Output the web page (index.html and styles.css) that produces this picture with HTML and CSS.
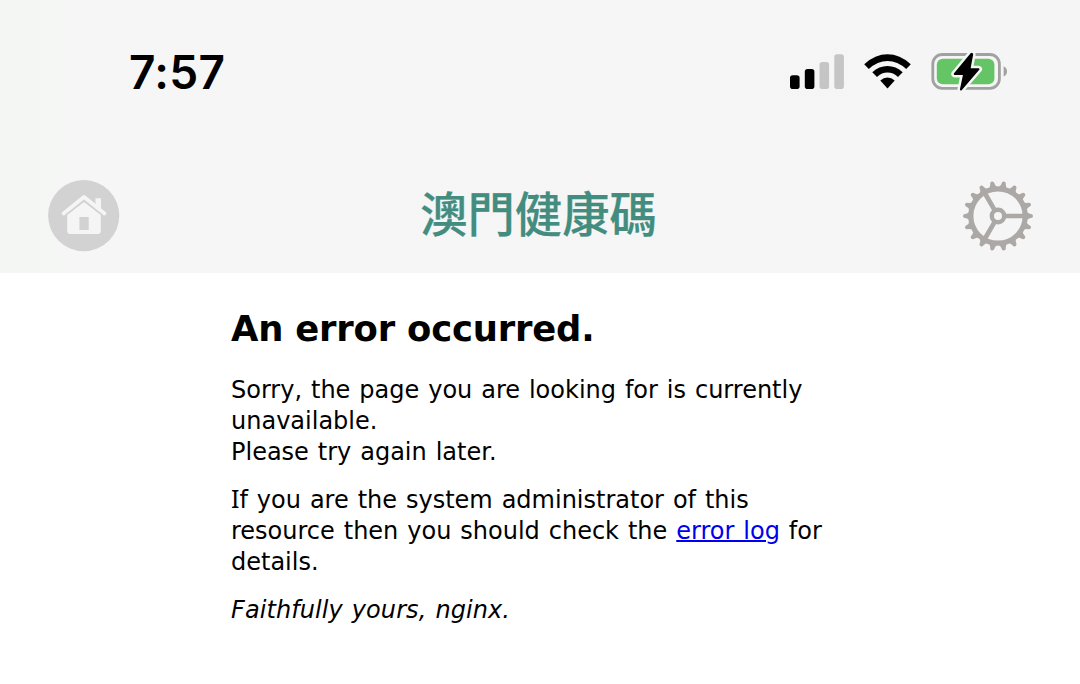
FILE: index.html
```html
<!DOCTYPE html>
<html lang="zh-Hant">
<head>
<meta charset="utf-8">
<title>澳門健康碼</title>
<link rel="stylesheet" href="styles.css">
</head>
<body>
<header class="top">
  <div class="status">
    <span class="time">7:57</span>
    <svg class="status-icons" width="230" height="60" viewBox="780 40 230 60" aria-hidden="true">
      <rect x="790" y="75.3" width="9.6" height="13.7" rx="2.8"/>
      <rect x="804.8" y="69" width="9.6" height="20" rx="2.8"/>
      <g fill="#c5c5c5"><rect x="819.5" y="62" width="9.6" height="27" rx="2.8"/><rect x="834.3" y="54.3" width="9.6" height="34.7" rx="2.8"/></g>
      <path d="M864.2 64.2Q875.2 54.3 887.5 54.3T910.8 64.2L906.2 69.1Q897.5 61.1 887.5 61.1T868.8 69.1Z"/>
      <path d="M872.3 72.3Q879 66 887.5 66T902.7 72.3L898 77Q893.3 72.6 887.5 72.6T877 77Z"/>
      <path d="M880.3 80.5Q883.6 77.5 887.5 77.5T894.7 80.5L887.5 88.5Z"/>
      <rect x="932.8" y="54.5" width="66.6" height="33.8" rx="9.5" fill="none" stroke="#a1a1a1" stroke-width="2.8"/>
      <path d="M1003.6 66.2Q1007 67.8 1007 71.4T1003.6 76.6Z" fill="#a1a1a1"/>
      <rect x="936.8" y="58.7" width="57.6" height="25.6" rx="6" fill="#65c466"/>
      <path d="M971.4 53.8L954.8 74H964.2L960.9 89.5L978.5 69.2H969.4L972.2 54.2Z" stroke="#f5f6f5" stroke-width="7" stroke-linejoin="round"/>
      <path d="M971.4 53.8L954.8 74H964.2L960.9 89.5L978.5 69.2H969.4L972.2 54.2Z" stroke="#000" stroke-width="2" stroke-linejoin="round"/>
    </svg>
  </div>
  <nav class="nav">
    <svg width="72" height="72" viewBox="-36 -36 72 72" aria-label="Home">
      <circle cx="-.3" cy="-.4" r="35.6" fill="#d2d2d2"/>
      <path d="M-20.5 -2.6L0 -19L20.5 -2.6" fill="none" stroke="#f4f5f4" stroke-width="3.8" stroke-linecap="round" stroke-linejoin="round"/>
      <path d="M11.5 -17.8H17V-5L11.5 -9Z" fill="#f4f5f4"/>
      <path fill-rule="evenodd" d="M0 -14L16.8 -1V15Q16.8 18 13.8 18H-13.8Q-16.8 18 -16.8 15V-1ZM-4.6 1V14H4.7V1Z" fill="#f4f5f4"/>
    </svg>
    <h1 class="brand">澳門健康碼</h1>
    <svg width="72" height="72" viewBox="-36 -36 72 72" aria-label="Settings">
      <defs><path id="tooth" d="M28 -4.4L31 -2.6L34 -1.8Q36 0 34 1.8L31 2.6L28 4.4Z"/></defs>
      <g fill="#aca8a6">
        <use href="#tooth"/><use href="#tooth" transform="rotate(20)"/><use href="#tooth" transform="rotate(40)"/><use href="#tooth" transform="rotate(60)"/><use href="#tooth" transform="rotate(80)"/><use href="#tooth" transform="rotate(100)"/><use href="#tooth" transform="rotate(120)"/><use href="#tooth" transform="rotate(140)"/><use href="#tooth" transform="rotate(160)"/><use href="#tooth" transform="rotate(180)"/><use href="#tooth" transform="rotate(200)"/><use href="#tooth" transform="rotate(220)"/><use href="#tooth" transform="rotate(240)"/><use href="#tooth" transform="rotate(260)"/><use href="#tooth" transform="rotate(280)"/><use href="#tooth" transform="rotate(300)"/><use href="#tooth" transform="rotate(320)"/><use href="#tooth" transform="rotate(340)"/>
      </g>
      <g fill="none" stroke="#aca8a6">
        <circle r="27.2" stroke-width="5.2"/>
        <circle r="6.2" stroke-width="4.4"/>
        <path d="M7 0H26M-3.5 6.06L-13 22.5M-3.5 -6.06L-13 -22.5" stroke-width="4.7"/>
      </g>
    </svg>
  </nav>
</header>
<main class="error">
  <h2 class="heading">An error occurred.</h2>
  <p class="para">Sorry, the page you are looking for is currently<br>unavailable.<br>Please try again later.</p>
  <p class="para"><span class="cap">I</span>f you are the system administrator of this<br>resource then you should check the <a class="link" href="#">error log</a> for<br>details.</p>
  <p class="para"><em class="sign">Faithfully yours, nginx.</em></p>
</main>
</body>
</html>
```
FILE: styles.css
```css
* { box-sizing: border-box; }
body { margin: 0; background: #fff; color: #000; }
.top { height: 273px; background: linear-gradient(90deg, #f3f6f3 0, #f5f6f5 6%, #f5f5f5 100%); }
.status { height: 144px; padding: 40px 70px 0 129px; display: flex; justify-content: space-between; align-items: flex-start; }
.time { font: 600 46px/64px Inter, sans-serif; letter-spacing: 0.3px; }
.nav { display: flex; justify-content: space-between; align-items: center; padding: 36px 46px 0 48px; }
.brand { margin: 0; padding: 0 5px 8px 0; font: 500 47.3px/64px "Noto Sans CJK TC", sans-serif; color: #438d80; -webkit-text-stroke: 0.25px #438d80; }
.error { padding: 35px 0 0 231px; font: 24px/31px Verdana, "DejaVu Sans", sans-serif; word-spacing: 1.3px; white-space: nowrap; }
.heading { margin: 0 0 26px; font-size: 35.4px; line-height: 41px; font-weight: 700; letter-spacing: -0.2px; word-spacing: 0; }
.para { margin: 0 0 17px; }
.cap { font-family: "Noto Sans", sans-serif; font-size: 25px; line-height: 1; }
.sign { letter-spacing: 0.08px; }
.link { color: #0000ee; text-decoration: underline; text-decoration-thickness: 2px; }
```
